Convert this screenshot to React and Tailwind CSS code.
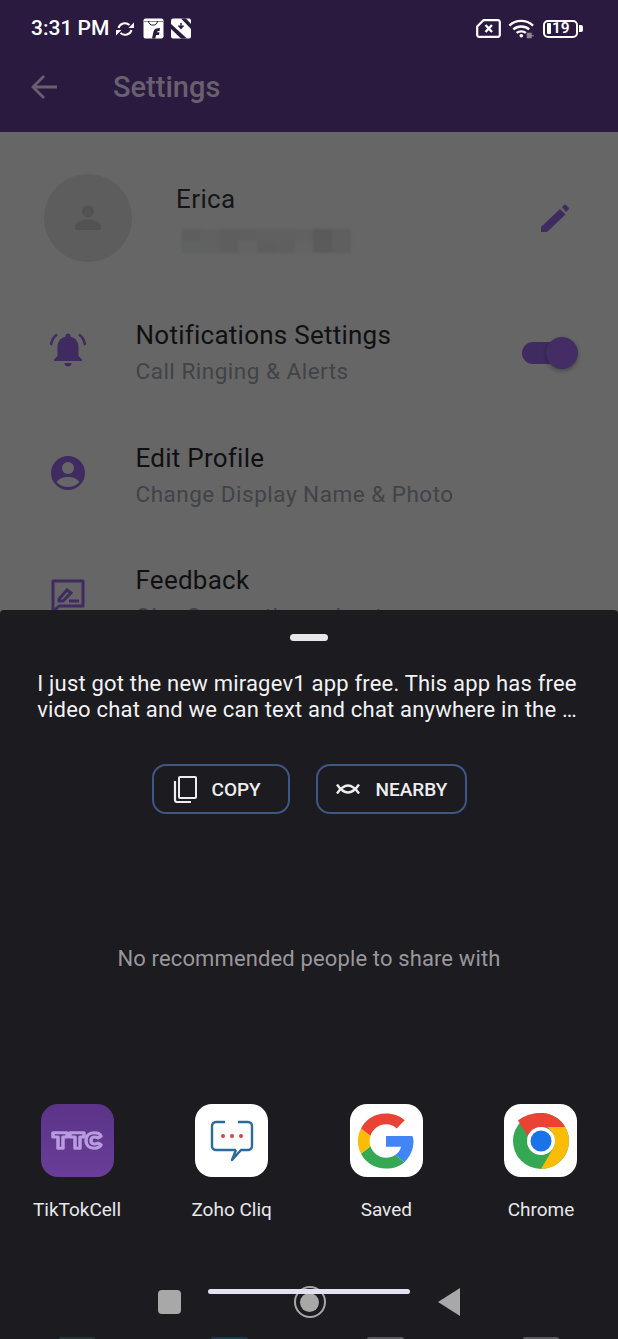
import React from "react";

const roboto = { fontFamily: "Roboto, sans-serif" };

const blurRows = [
  ["#5e5e5e","#616161","#5e5e5e","#5f5f5f","#606060","#606060","#616161","#5a5a5a","#5f5f5f"],
  ["#5f6261","#616161","#5e5e5e","#636363","#5e5e5e","#5f5f5f","#636363","#5b5b5b","#5f5f5f"],
];

function StatusBar() {
  return (
    <div className="flex h-[55px] items-center justify-between pl-[31px] pr-[35px] pt-[2px]">
      <div className="flex items-center">
        <span className="text-[21px] font-medium leading-none text-white">3:31 PM</span>
        <svg viewBox="0 0 18 16" className="ml-[7px] h-[16px] w-[18px]" fill="none" stroke="white" strokeWidth="2">
          <path d="M2.500 7a6.500 6 0 0 1 11-3" />
          <path d="M15.500 9a6.500 6 0 0 1-11 3" />
          <path d="M18 1.500V7h-5.500z" fill="white" stroke="none" />
          <path d="M0 14.500V9h5.500z" fill="white" stroke="none" />
        </svg>
        <svg viewBox="0 0 21 21" className="ml-[9px] h-[21px] w-[21px]">
          <rect x="0.500" y="0.500" width="20" height="20" rx="2" fill="white" />
          <path d="M1 3.500h19" stroke="#8d8794" strokeWidth="1" />
          <path d="M5.500 3c0 5.500 9 5.500 9 0" stroke="#2a1a40" strokeWidth="1" fill="none" />
          <path d="M9 20.500l1.500-7c.5-2.500 3-3.500 6.500-3.500l-.5 3c-1.500 0-2.300.3-2.700 1.200h2.700l-.7 2.800h-2.700l-.8 3.500z" fill="#2a1a40" />
        </svg>
        <svg viewBox="0 0 20 21" className="ml-[7px] h-[21px] w-[20px]">
          <rect x="0" y="0.500" width="20" height="20" rx="2" fill="white" />
          <path d="M0 6V11L10 20.500H16z" fill="#2a1a40" />
          <path d="M10 0.500H15L20 6V11z" fill="#2a1a40" />
          <path d="M10 5v4.500M7.500 7.500l2.500 2.800 2.500-2.800" stroke="#2a1a40" strokeWidth="1.500" fill="none" />
        </svg>
      </div>
      <div className="flex items-center">
        <svg viewBox="0 0 25 19" className="h-[19px] w-[25px]" fill="none">
          <path d="M1.200 7.500L7.500 1.200H22a1.800 1.800 0 0 1 1.800 1.800V16a1.800 1.800 0 0 1-1.800 1.800H3A1.800 1.800 0 0 1 1.200 16z" stroke="white" strokeWidth="2.200" />
          <path d="M9.500 6l6.500 7M16 6l-6.500 7" stroke="white" strokeWidth="2.400" />
        </svg>
        <svg viewBox="0 0 28 21" className="ml-[7px] h-[21px] w-[27px]" fill="none" stroke="white" strokeWidth="2.500">
          <path d="M1.500 7.500C8 1 19 1 26 7.500" />
          <path d="M5.500 11.500c4.500-4 12-4 16.500 0" />
          <path d="M9 15c2.500-2 7-2 9.500 0" />
          <circle cx="13.800" cy="18" r="1.900" fill="white" stroke="none" />
          <path d="M20 15.500h4v4.500h-4zM24 18h3" fill="#8d8794" stroke="#8d8794" strokeWidth="1.200" />
        </svg>
        <div className="relative ml-[8px] flex h-[18px] w-[35px] items-center rounded-[5px] border-2 border-white">
          <div className="ml-[2px] h-[11px] w-[4px] rounded-[1px] bg-white" />
          <span className="ml-[1px] text-[15.500px] font-semibold leading-none text-white">19</span>
        </div>
        <div className="ml-[1px] h-[7px] w-[4px] rounded-r-[2px] bg-white" />
      </div>
    </div>
  );
}

function Row({ icon, title, subtitle, trailing }) {
  return (
    <div className="flex h-[122.500px] items-start pl-[50px] pr-[44px]">
      <div className="mt-[15px] flex h-[36px] w-[36px] items-center justify-center">{icon}</div>
      <div className="ml-[49.500px] flex-1">
        <div className="text-[26px] leading-[36px] tracking-[0.25px] text-[#101012]">{title}</div>
        <div className="text-[22.500px] leading-[37px] tracking-[0.5px] text-[#404347]">{subtitle}</div>
      </div>
      {trailing}
    </div>
  );
}

function AppTile({ label, children, className }) {
  return (
    <div className="flex w-[120px] flex-col items-center">
      <div className={`flex h-[73px] w-[73px] items-center justify-center overflow-hidden rounded-[17px] ${className}`}>
        {children}
      </div>
      <div className="mt-[22px] whitespace-nowrap text-[19px] leading-[22px] text-[#e8e8ea]">{label}</div>
    </div>
  );
}

export default function App() {
  return (
    <div style={roboto} className="relative h-[1339px] w-[618px] overflow-hidden bg-[#666666]">
      <header className="h-[132px] bg-[#2a1a40]">
        <StatusBar />
        <div className="flex h-[64px] items-center pl-[31px]">
          <svg viewBox="0 0 26 26" className="h-[26px] w-[26px]" fill="none" stroke="#68606f" strokeWidth="2.800">
            <path d="M26 13H2M13 2L2 13l11 11" />
          </svg>
          <span className="ml-[56px] text-[29px] font-medium leading-none text-[#68606f]">Settings</span>
        </div>
      </header>

      <section className="flex h-[185px] items-start pl-[44px] pr-[49px] pt-[42px]">
        <div className="flex h-[88px] w-[88px] items-center justify-center rounded-full bg-[#5d5d5d]">
          <svg viewBox="0 0 26 26" className="h-[26px] w-[26px]" fill="#525252">
            <circle cx="13" cy="6.500" r="6" />
            <path d="M0 22c0-5 7-7.500 13-7.500s13 2.500 13 7.500c0 2-1 3-3 3H3c-2 0-3-1-3-3z" />
          </svg>
        </div>
        <div className="ml-[44px] flex-1 pt-[7px]">
          <div className="text-[26px] leading-[36px] tracking-[0.4px] text-[#151517]">Erica</div>
          <div className="ml-[6px] mt-[12px] flex h-[24px] w-[169px] flex-col blur-[1px]">
            {blurRows.map((r, i) => (
              <div key={i} className="flex flex-1">
                {r.map((c, j) => (
                  <div key={j} className="h-full flex-1" style={{ background: c }} />
                ))}
              </div>
            ))}
          </div>
        </div>
        <svg viewBox="0 0 28 28" className="mt-[30px] h-[28px] w-[28px]" fill="#3f2b60">
          <path d="M0 28v-5L19 5l5.500 5.500L6 28z" />
          <path d="M21 3l2-2c.7-.7 1.500-.7 2 0l2.500 2.500c.7.700.5 1.500 0 2L25 8z" />
        </svg>
      </section>

      <Row
        title="Notifications Settings"
        subtitle="Call Ringing & Alerts"
        icon={
          <svg viewBox="0 0 36 36" className="h-[36px] w-[36px]" fill="#3f2b60">
            <path d="M18 1.500c1.500 0 2.500 1 2.500 2.500v.7C26 6 28.500 10 28.500 15v9l3.500 3.500V29H4v-1.500L7.500 24v-9C7.500 10 10 6 15.500 4.700V4c0-1.500 1-2.500 2.500-2.500z" />
            <path d="M14.500 31h7c0 2-1.500 3.500-3.500 3.500s-3.500-1.500-3.500-3.500z" />
            <path d="M7 2.500C3.500 5 1.500 9 1 13M29 2.500c3.500 2.500 5.500 6.500 6 10.500" stroke="#3f2b60" strokeWidth="2.500" fill="none" />
          </svg>
        }
        trailing={
          <div className="relative mt-[25px] h-[22px] w-[52px] rounded-full bg-[#3f2b60]">
            <div className="absolute right-[-4px] top-[-5px] h-[32px] w-[32px] rounded-full bg-[#432d64] shadow-[0_2px_4px_rgba(0,0,0,0.3)]" />
          </div>
        }
      />
      <Row
        title="Edit Profile"
        subtitle="Change Display Name & Photo"
        icon={
          <svg viewBox="0 0 34 34" className="h-[34px] w-[34px]">
            <circle cx="17" cy="17" r="17" fill="#3f2b60" />
            <circle cx="17" cy="12" r="6" fill="#666666" />
            <path d="M5.500 26c3-4 7.500-5 11.500-5s8.500 1 11.500 5c-3 3.500-7 5-11.500 5s-8.500-1.500-11.500-5z" fill="#666666" />
          </svg>
        }
      />
      <Row
        title="Feedback"
        subtitle="Give Suggestions about our app"
        icon={
          <svg viewBox="0 0 34 36" className="mt-[4px] h-[36px] w-[34px]" fill="none">
            <path d="M2 2h30v25H8l-6 6z" stroke="#3f2b60" strokeWidth="3" strokeLinejoin="round" />
            <path d="M8 20l8-9 4 3-8 8H8zM18 22h10" stroke="#3f2b60" strokeWidth="3" />
          </svg>
        }
      />

      <div className="absolute inset-x-0 bottom-0 flex h-[729px] flex-col items-center rounded-t-[4px] bg-[#1c1b20]">
        <div className="mt-[24px] h-[7px] w-[38px] rounded-full bg-[#e8e8ea]" />
        <p className="mr-[4px] mt-[30px] w-[600px] text-center text-[22px] leading-[26px] tracking-[0.2px] text-[#f2f2f4]">
          I just got the new miragev1 app free. This app has free
          <br />
          video chat and we can text and chat anywhere in the …
        </p>
        <div className="mt-[41px] flex gap-[26px]">
          <button className="flex h-[50px] w-[138px] items-center rounded-[14px] border-2 border-[#405684] pl-[19px] pt-[2px] text-[19px] font-medium text-[#eeeef0]">
            <svg viewBox="0 0 24 27" className="mt-[-2px] h-[27px] w-[24px]" fill="none" stroke="#eeeef0" strokeWidth="2">
              <rect x="6" y="1" width="17" height="21" rx="1" />
              <path d="M2 5v19c0 1 .5 2 2 2h14" strokeWidth="2.200" />
            </svg>
            <span className="ml-[15px]">COPY</span>
          </button>
          <button className="flex h-[50px] w-[151px] items-center rounded-[14px] border-2 border-[#405684] pl-[18px] pt-[2px] text-[19px] font-medium text-[#eeeef0]">
            <svg viewBox="0 0 24 10" className="mt-[-2px] h-[10px] w-[24px]" fill="none" stroke="#eeeef0" strokeWidth="2.400">
              <path d="M1 9.500Q12 -6.500 23 9.500" />
              <path d="M1 .5Q12 16.500 23 .5" />
            </svg>
            <span className="ml-[16px]">NEARBY</span>
          </button>
        </div>
        <div className="mt-[132px] text-[22px] leading-[26px] tracking-[0.13px] text-[#98989c]">No recommended people to share with</div>

        <div className="mt-[132px] flex w-full justify-between px-[17px]">
          <AppTile label="TikTokCell" className="bg-gradient-to-b from-[#5a3488] to-[#6a3d98]">
            <svg viewBox="0 0 52 22" preserveAspectRatio="none" className="h-[19px] w-[52px]" fill="none" stroke="#b99be0" strokeWidth="3.500" strokeLinejoin="round">
              <path d="M2 2h14v5h-4v13H7V7H2zM19 2h14v5h-4v13h-5V7h-5z" />
              <path d="M50 6c-1-3-4-4-7-4-5 0-8 4-8 9s3 9 8 9c3 0 6-1 7-4l-3-2c-1 1-2 1-4 1-2 0-3-2-3-4s1-4 3-4c2 0 3 0 4 1z" />
            </svg>
          </AppTile>
          <AppTile label="Zoho Cliq" className="bg-white">
            <svg viewBox="0 0 44 42" className="h-[42px] w-[44px]" fill="none">
              <path d="M15 2H6a4 4 0 0 0-4 4v20a4 4 0 0 0 4 4h20" stroke="#2b6a99" strokeWidth="2.400" />
              <path d="M28 2h10a4 4 0 0 1 4 4v20a4 4 0 0 1-4 4h-7l-9 10 4-10" stroke="#2b6a99" strokeWidth="2.400" strokeLinejoin="round" />
              <circle cx="13" cy="16" r="2" fill="#d14545" />
              <circle cx="22" cy="16" r="2" fill="#d14545" />
              <circle cx="31" cy="16" r="2" fill="#d14545" />
            </svg>
          </AppTile>
          <AppTile label="Saved" className="bg-white">
            <svg viewBox="0 0 48 48" className="h-[60px] w-[60px]">
              <path fill="#4285f4" d="M45.100 20H24v8.500h12.100c-.8 3-2.600 5.200-4.800 6.700l7.400 5.700C43.100 36.900 46 31 46 24c0-1.400-.3-2.800-.9-4z" />
              <path fill="#34a853" d="M24 46c6 0 11-2 14.700-5.100l-7.400-5.700c-2 1.400-4.500 2.200-7.300 2.200-5.800 0-10.700-3.900-12.400-9.200l-7.600 5.900C7.600 41.200 15.200 46 24 46z" />
              <path fill="#fbbc05" d="M11.600 28.200c-.9-2.700-.9-5.700 0-8.400L4 13.900C.7 20.400.7 27.600 4 34.100z" />
              <path fill="#ea4335" d="M24 10.600c3.300 0 6.200 1.100 8.500 3.300l6.500-6.500C35 3.900 30 2 24 2 15.200 2 7.600 6.800 4 13.900l7.600 5.900c1.700-5.300 6.600-9.200 12.400-9.200z" />
            </svg>
          </AppTile>
          <AppTile label="Chrome" className="bg-white">
            <svg viewBox="0 0 56 56" className="h-[56px] w-[56px]">
              <circle cx="28" cy="28" r="28" fill="#34a853" />
              <path fill="#ea4335" d="M28 0c10.500 0 19.500 5.700 24.300 14H28c-6 0-11 4-13 9.500L5 7.500C10.500 3 18.500 0 28 0z" />
              <path fill="#fbbc05" d="M52.300 14C54.700 18 56 23 56 28c0 15.500-12.500 28-28 28l12-20.500c1.200-2 2-4.500 2-7.500 0-5.500-3-10.500-7.500-14z" />
              <circle cx="28" cy="28" r="14" fill="white" />
              <circle cx="28" cy="28" r="10.500" fill="#1a73e8" />
            </svg>
          </AppTile>
        </div>

        <div className="relative mt-[65px] flex w-full items-center justify-center">
          <div className="absolute left-[208px] top-[3px] h-[5px] w-[202px] rounded-full bg-[#e2e2f2]" />
          <div className="flex w-[302px] items-center justify-between">
            <div className="h-[24px] w-[23px] rounded-[4px] bg-[#a8a8a8]" />
            <div className="flex h-[32px] w-[32px] items-center justify-center rounded-full border-[2px] border-[#a8a8a8]">
              <div className="h-[19px] w-[19px] rounded-full bg-[#a8a8a8]" />
            </div>
            <svg viewBox="0 0 22 28" className="h-[28px] w-[22px]"><path d="M0 14L22 0v28z" fill="#a8a8a8" /></svg>
          </div>
        </div>

        <div className="mt-[19px] flex w-full justify-between pl-[59px] pr-[59px]">
          <div className="h-[2px] w-[36px] rounded-t-[2px] bg-[#28353a]" />
          <div className="ml-[-3px] h-[2px] w-[37px] rounded-t-[2px] bg-[#1c3a4a]" />
          <div className="h-[2px] w-[37px] rounded-t-[2px] bg-[#5a5a5e]" />
          <div className="h-[2px] w-[36px] rounded-t-[2px] bg-[#5a5a5e]" />
        </div>
      </div>
    </div>
  );
}
